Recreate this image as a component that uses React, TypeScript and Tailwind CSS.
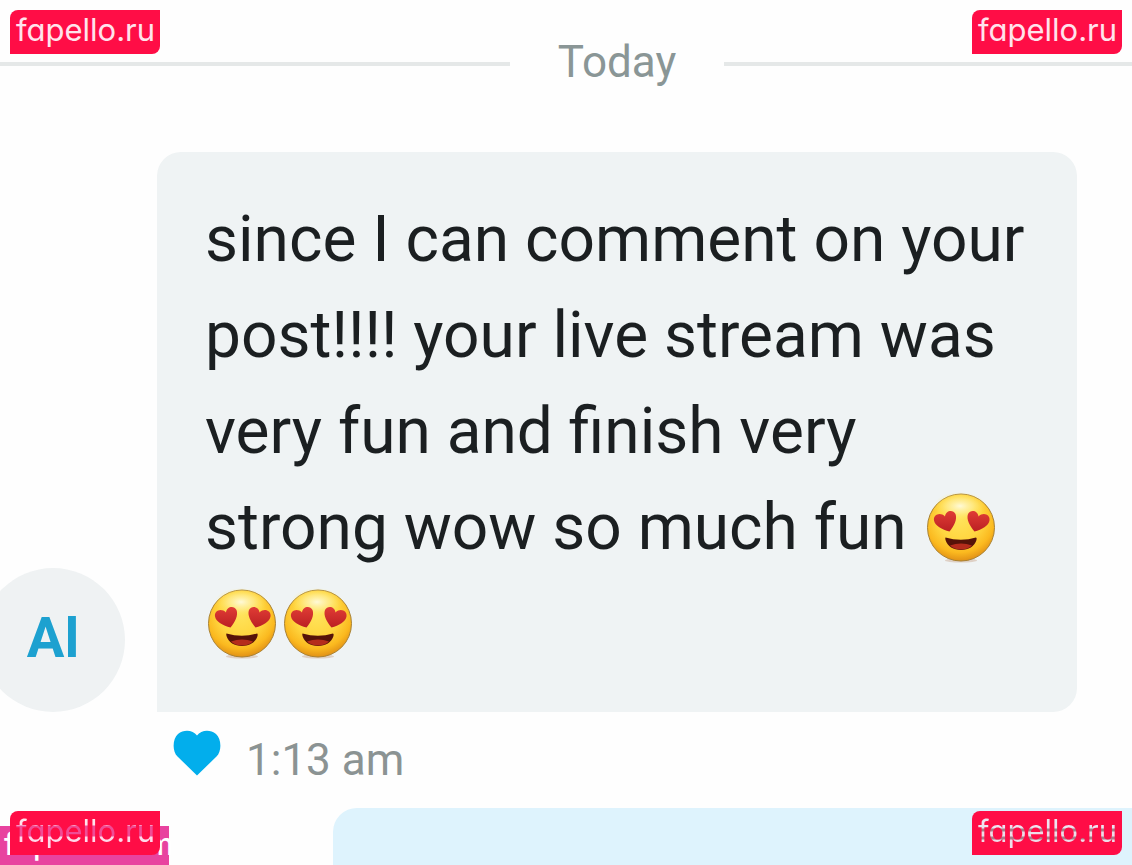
import React from "react";

function HeartEyes() {
  return (
    <svg
      viewBox="0 0 72 72"
      role="img"
      aria-label="Smiling face with heart eyes"
      className="inline-block size-[72px]"
    >
      <defs>
        <radialGradient id="face" cx="0.48" cy="0.36" r="0.66">
          <stop offset="0" stopColor="#ffe45c" />
          <stop offset="0.5" stopColor="#ffd640" />
          <stop offset="0.78" stopColor="#fbb91f" />
          <stop offset="1" stopColor="#dd8a14" />
        </radialGradient>
        <radialGradient id="shine">
          <stop offset="0" stopColor="#fffbe0" stopOpacity="0.95" />
          <stop offset="0.5" stopColor="#fff3a8" stopOpacity="0.6" />
          <stop offset="1" stopColor="#ffe866" stopOpacity="0" />
        </radialGradient>
        <linearGradient id="eye" x1="0" y1="0" x2="0" y2="1">
          <stop offset="0" stopColor="#e03c35" />
          <stop offset="1" stopColor="#bb2023" />
        </linearGradient>
      </defs>
      <ellipse cx="36" cy="68.500" rx="16" ry="2" fill="#caa68c" opacity="0.45" />
      <circle cx="36" cy="35.500" r="33.500" fill="url(#face)" stroke="#a98234" strokeWidth="1" />
      <ellipse cx="35" cy="14" rx="26" ry="14" fill="url(#shine)" />
      <path
        d="M24.500 39.500C17 37.500 10 34 9 28.500C8 23 15 19.500 20 24.500C20.500 18.500 28 17 30.500 22C32.500 27.500 29 34 24.500 39.500Z"
        fill="url(#eye)"
      />
      <path
        d="M49.500 39.500C57 37.500 63.500 34 64.500 28.500C65.500 23 58.500 19.500 53.500 24.500C53 18.500 45.500 17 43 22C41 27.500 45 34 49.500 39.500Z"
        fill="url(#eye)"
      />
      <path
        d="M20.500 45.500Q36 50 51 45.500Q52 45.500 51.500 48C49.500 54.500 43.500 58 36 58S22.500 54.500 20.500 48Q20 45.500 20.500 45.500Z"
        fill="#561309"
      />
      <path d="M25 53.500Q36 49.500 47 53.500Q43 57.500 36 57.500T25 53.500Z" fill="#b52c1c" />
    </svg>
  );
}

function Badge({ className, textClass }: { className: string; textClass: string }) {
  return (
    <div
      className={`absolute z-10 flex h-11 w-[150px] justify-center rounded-tl-lg rounded-br-lg bg-[#ff0d46] ${className}`}
    >
      <span
        className={`h-11 pl-px font-['Inter',sans-serif] text-[31px] leading-10 [font-feature-settings:'cv11'] ${textClass}`}
      >
        fapello.ru
      </span>
    </div>
  );
}

export default function App() {
  return (
    <main className="relative flex min-h-screen flex-col overflow-hidden bg-[#fefefe] font-['Roboto',sans-serif]">
      <Badge className="top-[10px] left-[10px]" textClass="text-[#ffe3ec]" />
      <Badge className="top-[10px] right-[10px]" textClass="text-[#ffe3ec]" />

      <div className="mt-[30px] flex shrink-0 items-center">
        <div className="h-1 flex-[5] bg-[#e5e8e8]" />
        <div className="w-[214px] pb-1 text-center text-[44px] leading-[64px] text-[#8a9696]">
          Today
        </div>
        <div className="h-1 flex-[4] bg-[#e5e8e8]" />
      </div>

      <div className="mt-[54px] mr-[55px] flex shrink-0 items-end gap-8">
        <div className="-ml-[19px] flex size-36 shrink-0 items-center justify-center rounded-full bg-[#eff2f3] text-[56px] font-bold text-[#1da1d0]">
          <span className="pb-1">Al</span>
        </div>
        <div className="flex-1 rounded-3xl rounded-bl-none bg-[#eff3f4] px-12 py-10">
          <p className="text-[64px] leading-[96px] text-[#1b1f21]">
            <span className="whitespace-nowrap">since I can comment on your</span>
            <br />
            post!!!! your live stream was
            <br />
            very fun and finish very
            <br />
            <span className="flex items-center gap-[18px] whitespace-nowrap">
              strong wow so much fun <HeartEyes />
            </span>
            <span className="flex h-24 items-center gap-1 pl-px">
              <HeartEyes />
              <HeartEyes />
            </span>
          </p>
        </div>
      </div>

      <div className="mt-4 ml-[173px] flex shrink-0 items-start gap-[25px]">
        <svg viewBox="0 0 48 46" className="mt-0.5 h-[46px] w-12" role="img" aria-label="Liked">
          <path
            d="M24 45.500L4.500 26.500C-1 21 -.5 9 5 4C11 -1 20 0 24 5.500C28 0 37 -1 43 4C48.500 9 49 21 43.500 26.500Z"
            fill="#02aeec"
          />
        </svg>
        <time className="text-[44px] leading-[64px] text-[#8b9393]">1:13 am</time>
      </div>

      <div className="mt-4 ml-[333px] min-h-14 flex-1 rounded-tl-3xl bg-[#def3fd]" />

      <div className="absolute bottom-0 left-0 h-[39px] w-[169px] bg-[#e8439f] pl-1 font-['Inter',sans-serif] text-[30px] leading-9 font-medium whitespace-nowrap text-white [font-feature-settings:'cv11']">
        fapello.com
      </div>
      <Badge
        className="bottom-[10px] left-[10px]"
        textClass="bg-[linear-gradient(to_bottom,#ffe3ec_0,#ffe3ec_14px,#f04c96_15px,#f04c96_25px,#ffd9ea_26px)] bg-clip-text text-transparent"
      />
      <Badge
        className="right-[10px] bottom-[10px]"
        textClass="bg-[linear-gradient(to_bottom,#eee3f0_0,#eee3f0_17px,#a87c88_18px,#a87c88_20px,#eedce8_21px,#eedce8_25px,#a87c88_26px,#a87c88_28px,#eedce8_29px)] bg-clip-text text-transparent"
      />
    </main>
  );
}
